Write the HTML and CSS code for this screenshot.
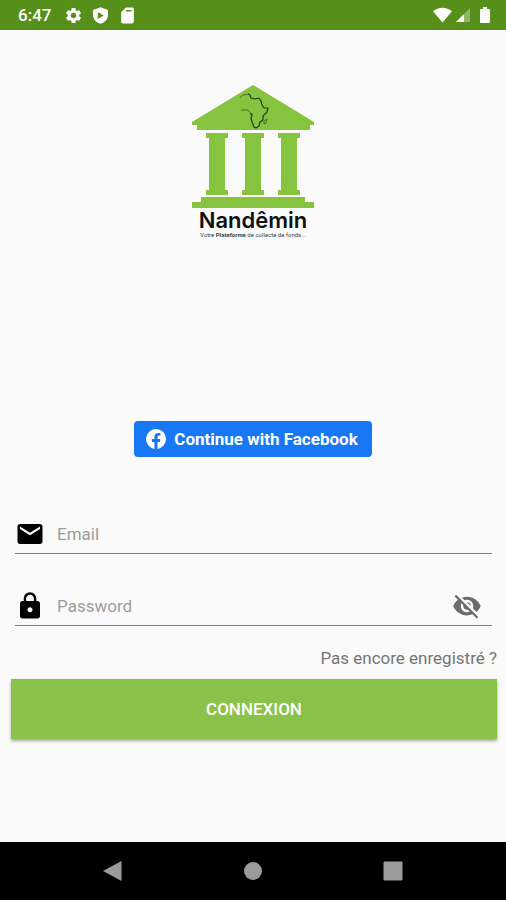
FILE: index.html
```html
<!DOCTYPE html>
<html lang="fr">
<head>
    <meta charset="UTF-8">
    <meta name="viewport" content="width=device-width, initial-scale=1.0">
    <title>Nandêmin - Connexion</title>
    <link rel="stylesheet" href="styles.css">
</head>
<body>
    <header class="status-bar">
        <div class="status-left">
            <span class="clock">6:47</span>
            <svg class="status-icon" viewBox="0 0 24 24"><path d="M19.14 12.94c.04-.3.06-.61.06-.94 0-.32-.02-.64-.07-.94l2.03-1.58c.18-.14.23-.41.12-.61l-1.92-3.32c-.12-.22-.37-.29-.59-.22l-2.39.96c-.5-.38-1.03-.7-1.62-.94l-.36-2.54c-.04-.24-.24-.41-.48-.41h-3.84c-.24 0-.43.17-.47.41l-.36 2.54c-.59.24-1.13.57-1.62.94l-2.39-.96c-.22-.08-.47 0-.59.22L2.74 8.87c-.12.21-.08.47.12.61l2.03 1.58c-.05.3-.09.63-.09.94s.02.64.07.94l-2.03 1.58c-.18.14-.23.41-.12.61l1.92 3.32c.12.22.37.29.59.22l2.39-.96c.5.38 1.03.7 1.62.94l.36 2.54c.05.24.24.41.48.41h3.84c.24 0 .44-.17.47-.41l.36-2.54c.59-.24 1.13-.56 1.62-.94l2.39.96c.22.08.47 0 .59-.22l1.92-3.32c.12-.22.07-.47-.12-.61l-2.01-1.58zM12 15.6c-1.98 0-3.6-1.62-3.6-3.6s1.62-3.6 3.6-3.6 3.6 1.62 3.6 3.6-1.62 3.6-3.6 3.6z"/></svg>
            <svg class="status-icon" viewBox="0 0 24 24"><path fill-rule="evenodd" d="M12 1.500 2.500 5v6.500c0 5 4 9.500 9.500 11 5.500-1.500 9.500-6 9.500-11V5zM8.500 7.500v9l7.500-4.500z"/></svg>
            <svg class="status-icon" viewBox="0 0 24 24"><path d="M18 2h-8L4 8v12c0 1.100.9 2 2 2h12c1.100 0 2-.9 2-2V4c0-1.100-.9-2-2-2zM17 7H10V5h7z" fill-rule="evenodd"/></svg>
        </div>
        <div class="status-right">
            <svg class="wifi" viewBox="0 0 20 16"><path d="M0 4C6-1 14-1 20 4L10 16z"/></svg>
            <svg class="signal" viewBox="0 0 16 16"><path opacity=".35" d="M16 0v16H0z"/><path d="M9 7v9H0z"/></svg>
            <svg class="battery" viewBox="0 0 10 16"><path d="M3 0h4v2h2q1 0 1 1v12q0 1-1 1H1q-1 0-1-1V3q0-1 1-1h2z"/></svg>
        </div>
    </header>

    <main class="content">
        <div class="logo">
            <svg class="temple" viewBox="0 0 122 123">
                <g fill="#86c440">
                    <!-- roof -->
                    <path d="M61 0 122 37v3h-4v5H5v-5H0v-3z"/>
                    <!-- columns -->
                    <path d="M14 48h22v5h-3v52h3v5H14v-5h3V53h-3z"/>
                    <path d="M50 48h22v5h-3v52h3v5H50v-5h3V53h-3z"/>
                    <path d="M86 48h22v5h-3v52h3v5H86v-5h3V53h-3z"/>
                    <!-- steps -->
                    <path d="M9 112h104v5h9v6H0v-6h9z"/>
                </g>
                <!-- africa -->
                <g fill="none" stroke="#243d14" stroke-linejoin="round">
                    <path stroke-width=".6" d="M48 13l3-3 6-1M49 25l4 0 3 0 2 2 1 3"/>
                    <path stroke-width="1.200" d="M56 9l2 1 1 3 4 1 4-1 2 3 1 4 2 3 4 0-1 4-4 4 0 4-3 2-1 4-3 2-2-1-2-5-1-4 1-3-1-2"/>
                    <path stroke-width=".6" d="M75 34l-1 4-2 1v-3z"/>
                </g>
            </svg>
            <h1 class="brand">Nandêmin</h1>
            <p class="tagline">Votre <b>Plateforme</b> de collecte de fonds...</p>
        </div>

        <button type="button" class="facebook-btn">
            <svg viewBox="0 0 24 24"><path d="M24 12a12 12 0 1 0-13.900 11.850v-8.380H7.100V12h3V9.360c0-3 1.800-4.670 4.550-4.670 1.300 0 2.680.24 2.680.24v2.950h-1.500c-1.500 0-1.950.93-1.950 1.870V12h3.300l-.53 3.470h-2.800v8.380A12 12 0 0 0 24 12z"/></svg>
            Continue with Facebook
        </button>

        <form class="login-form">
            <div class="field">
                <label for="email" aria-label="Email">
                    <svg class="field-icon" viewBox="0 0 24 24"><path d="M20 4H4c-1.100 0-2 .9-2 2v12c0 1.100.9 2 2 2h16c1.100 0 2-.9 2-2V6c0-1.100-.9-2-2-2zm0 4l-8 5-8-5V6l8 5 8-5v2z"/></svg>
                </label>
                <input type="email" id="email" name="email" placeholder="Email">
            </div>

            <div class="field">
                <label for="password" aria-label="Password">
                    <svg class="field-icon" viewBox="0 0 24 24"><path d="M18 8h-1V6c0-2.760-2.240-5-5-5S7 3.240 7 6v2H6c-1.100 0-2 .9-2 2v10c0 1.100.9 2 2 2h12c1.100 0 2-.9 2-2V10c0-1.100-.9-2-2-2zm-6 9c-1.100 0-2-.9-2-2s.9-2 2-2 2 .9 2 2-.9 2-2 2zm3.100-9H8.900V6c0-1.710 1.390-3.100 3.100-3.100s3.100 1.390 3.100 3.100v2z"/></svg>
                </label>
                <input type="password" id="password" name="password" placeholder="Password">
                <button type="button" class="toggle-btn" aria-label="Afficher le mot de passe">
                    <svg class="field-icon" viewBox="0 0 24 24"><path d="M12 7c2.760 0 5 2.240 5 5 0 .65-.13 1.260-.36 1.830l2.920 2.920c1.510-1.260 2.700-2.890 3.430-4.750-1.730-4.390-6-7.500-11-7.500-1.400 0-2.740.25-3.980.7l2.160 2.160C10.740 7.130 11.350 7 12 7zM2 4.270l2.280 2.280.46.46C3.080 8.300 1.780 10.020 1 12c1.730 4.390 6 7.500 11 7.500 1.550 0 3.030-.3 4.380-.84l.42.42L19.730 22 21 20.730 3.270 3 2 4.270zM7.530 9.800l1.550 1.550c-.05.21-.08.43-.08.65 0 1.660 1.340 3 3 3 .22 0 .44-.03.65-.08l1.550 1.550c-.67.33-1.410.53-2.200.53-2.760 0-5-2.240-5-5 0-.79.2-1.530.53-2.200zm4.310-.78l3.150 3.150.02-.16c0-1.660-1.340-3-3-3l-.17.01z"/></svg>
                </button>
            </div>

            <a href="#" class="register-link">Pas encore enregistré ?</a>
            <button type="submit" class="submit-btn">CONNEXION</button>
        </form>
    </main>

    <nav class="nav-bar">
        <button type="button" aria-label="Retour"><svg viewBox="0 0 20 20"><path d="M18.500 0v20L0 10z"/></svg></button>
        <button type="button" aria-label="Accueil"><svg viewBox="0 0 20 20"><circle cx="10" cy="10" r="9"/></svg></button>
        <button type="button" aria-label="Applications"><svg viewBox="0 0 20 20"><rect x="0.500" y="0.500" width="19" height="19" rx="1"/></svg></button>
    </nav>
</body>
</html>
```
FILE: styles.css
```css
* {
    margin: 0;
    padding: 0;
    box-sizing: border-box;
}

body {
    font-family: Roboto, "Liberation Sans", sans-serif;
    background: #fafafa;
    min-height: 100vh;
    display: flex;
    flex-direction: column;
}

svg {
    display: block;
}

button {
    font-family: inherit;
    border: none;
    cursor: pointer;
}

.status-bar {
    height: 30px;
    padding: 0 16px 0 18px;
    background: #568f1a;
    color: white;
    fill: white;
    display: flex;
    align-items: center;
    justify-content: space-between;
}

.status-left {
    display: flex;
    align-items: center;
    gap: 8px;
}

.clock {
    font-size: 17px;
    font-weight: 500;
    margin-right: 5px;
}

.status-icon {
    width: 19px;
    height: 19px;
}

.status-right {
    display: flex;
    align-items: center;
    gap: 4px;
}

.wifi {
    width: 19px;
    height: 16px;
}

.signal {
    width: 14px;
    height: 16px;
}

.battery {
    width: 10px;
    height: 16px;
    margin-left: 6px;
}

.content {
    flex: 1;
    display: flex;
    flex-direction: column;
    align-items: center;
    padding-top: 55px;
}

.logo {
    display: flex;
    flex-direction: column;
    align-items: center;
}

.temple {
    width: 122px;
    height: 123px;
}

.brand {
    font-family: Inter, sans-serif;
    font-size: 22px;
    line-height: 24px;
    font-weight: 600;
    color: #111;
}

.tagline {
    font-size: 6px;
    line-height: 6px;
    color: #444;
}

.facebook-btn {
    display: flex;
    align-items: center;
    gap: 8px;
    height: 36px;
    margin-top: 183px;
    padding: 0 14px 0 12px;
    border-radius: 4px;
    background: #1877f2;
    color: white;
    fill: white;
    font-size: 17px;
    font-weight: 700;
}

.facebook-btn svg {
    width: 20px;
    height: 20px;
}

.login-form {
    width: 100%;
    padding: 0 9px 0 11px;
    margin-top: 60px;
    display: flex;
    flex-direction: column;
}

.field {
    display: flex;
    align-items: center;
    height: 37px;
    margin: 0 5px 35px 4px;
    padding-bottom: 2px;
    border-bottom: 1px solid #808080;
}

.field-icon {
    width: 30px;
    height: 30px;
}

.field input {
    flex: 1;
    min-width: 0;
    margin-left: 12px;
    border: none;
    outline: none;
    background: transparent;
    font-family: inherit;
    font-size: 17px;
    color: #222;
}

.field input::placeholder {
    color: #9c9c9c;
}

.toggle-btn {
    background: transparent;
    fill: #6b6b6b;
    margin-right: 10px;
}

.register-link {
    align-self: flex-end;
    margin-top: -15px;
    line-height: 24px;
    font-size: 17px;
    color: #757575;
    text-decoration: none;
}

.submit-btn {
    height: 60px;
    margin-top: 9px;
    background: #8bc34a;
    color: white;
    font-size: 17px;
    font-weight: 500;
    box-shadow: 0 2px 3px rgba(0, 0, 0, 0.35);
}

.nav-bar {
    height: 58px;
    background: black;
    display: flex;
    align-items: center;
    justify-content: center;
    gap: 120px;
}

.nav-bar button {
    background: transparent;
    fill: #9b9b9b;
}

.nav-bar svg {
    width: 20px;
    height: 20px;
}
```
